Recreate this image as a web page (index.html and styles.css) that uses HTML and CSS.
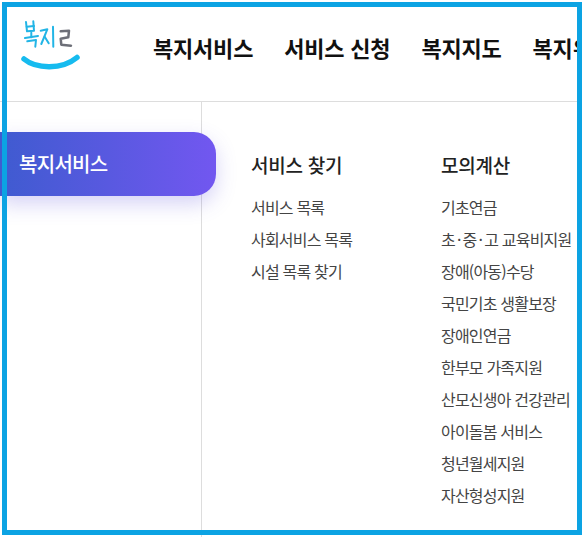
FILE: index.html
```html
<!DOCTYPE html>
<html lang="ko">
<head>
  <meta charset="UTF-8" />
  <meta name="viewport" content="width=device-width, initial-scale=1.0"/>
  <title>복지로</title>
  <link rel="stylesheet" href="styles.css">
</head>
<body>

  <header>
    <a class="logo" aria-label="복지로">
      <svg width="62" height="60" viewBox="0 0 62 60" fill="none" stroke-linecap="round" stroke-linejoin="round">
        <g stroke="#22b5e6" stroke-width="2">
          <path d="M7 7 L8 16.3 L15 15.7 L14.3 6.3"/>
          <path d="M7.7 11.7 L15 11"/>
          <path d="M12.3 17.7 L12.3 22.3"/>
          <path d="M6 23 L19 21"/>
          <path d="M8.3 26.3 L17 25 L16.3 31.7"/>
          <path d="M21.7 15.7 L28.3 14.3 L22.3 29"/>
          <path d="M25.7 21.7 L29.7 28.3"/>
          <path d="M34 11.7 L34.3 31.7"/>
        </g>
        <path d="M41.7 16.3 L50 15.7 L49.3 22.3 L41.7 23.7 L42.3 29.7 L52 30.7" stroke="#6d6f78" stroke-width="2.5"/>
        <path d="M5 44 C17 54 43 55 58 42.5" stroke="#16bbef" stroke-width="5.5"/>
      </svg>
    </a>
    <nav class="gnb">
      <a>복지서비스</a>
      <a>서비스 신청</a>
      <a>복지지도</a>
      <a>복지위기 알림</a>
    </nav>
  </header>

  <div class="main">
    <div class="sidebar">
      <button class="side-active">복지서비스</button>
    </div>

    <div class="menu">
      <div class="menu-col col-find">
        <h3>서비스 찾기</h3>
        <a>서비스 목록</a>
        <a>사회서비스 목록</a>
        <a>시설 목록 찾기</a>
      </div>
      <div class="menu-col">
        <h3>모의계산</h3>
        <a>기초연금</a>
        <a>초<span class="dot">·</span>중<span class="dot">·</span>고 교육비지원</a>
        <a>장애(아동)수당</a>
        <a>국민기초 생활보장</a>
        <a>장애인연금</a>
        <a>한부모 가족지원</a>
        <a>산모신생아 건강관리</a>
        <a>아이돌봄 서비스</a>
        <a>청년월세지원</a>
        <a>자산형성지원</a>
      </div>
    </div>
  </div>

  <!-- blue capture frame drawn over the page -->
  <div class="frame"></div>

</body>
</html>
```

FILE: styles.css
```css
* {
  box-sizing: border-box;
}

html,
body {
  height: 100%;
}

body {
  margin: 0;
  width: 582px;
  height: 537px;
  overflow: hidden;
  position: relative;
  display: flex;
  flex-direction: column;
  background-color: #fff;
  color: #222;
  font-family: "Noto Sans CJK KR", "Noto Sans", sans-serif;
}

header {
  height: 102px;
  flex-shrink: 0;
  border-bottom: 1px solid #ddd;
  display: flex;
  overflow: hidden;
}

.logo {
  width: 153px;
  flex-shrink: 0;
  padding: 15px 0 0 19px;
}

.gnb {
  display: flex;
  gap: 31px;
  padding-top: 31px;
  white-space: nowrap;
}

.gnb a {
  font-size: 22px;
  line-height: 32px;
  font-weight: 700;
  letter-spacing: -0.2px;
  color: #111;
}

.main {
  flex: 1;
  display: flex;
}

.sidebar {
  width: 202px;
  flex-shrink: 0;
  border-right: 1px solid #ddd;
  padding-top: 30px;
}

.side-active {
  display: block;
  width: 216px;
  height: 64px;
  padding: 0 0 2px 19px;
  border: none;
  border-radius: 0 22px 22px 0;
  background: linear-gradient(90deg, #3f5bd0, #7257f0);
  box-shadow: 0 8px 20px rgba(90, 80, 220, 0.25);
  color: #fff;
  font-family: inherit;
  font-size: 20px;
  font-weight: 500;
  letter-spacing: -0.7px;
  text-align: left;
  position: relative;
}

.menu {
  flex: 1;
  display: flex;
  padding: 48px 0 0 49px;
}

.menu-col {
  display: flex;
  flex-direction: column;
  white-space: nowrap;
}

.col-find {
  width: 190px;
}

.menu-col h3 {
  margin: 0 0 11px;
  font-size: 19px;
  line-height: 30px;
  font-weight: 500;
  letter-spacing: -0.25px;
  color: #222;
}

.menu-col a {
  font-size: 16px;
  line-height: 32px;
  letter-spacing: -0.8px;
  color: #444;
}

.dot {
  margin: 0 2px;
}

.frame {
  position: absolute;
  left: 2px;
  top: 2px;
  width: 580px;
  height: 533px;
  border: 5px solid #0ca3e3;
  pointer-events: none;
}
```
